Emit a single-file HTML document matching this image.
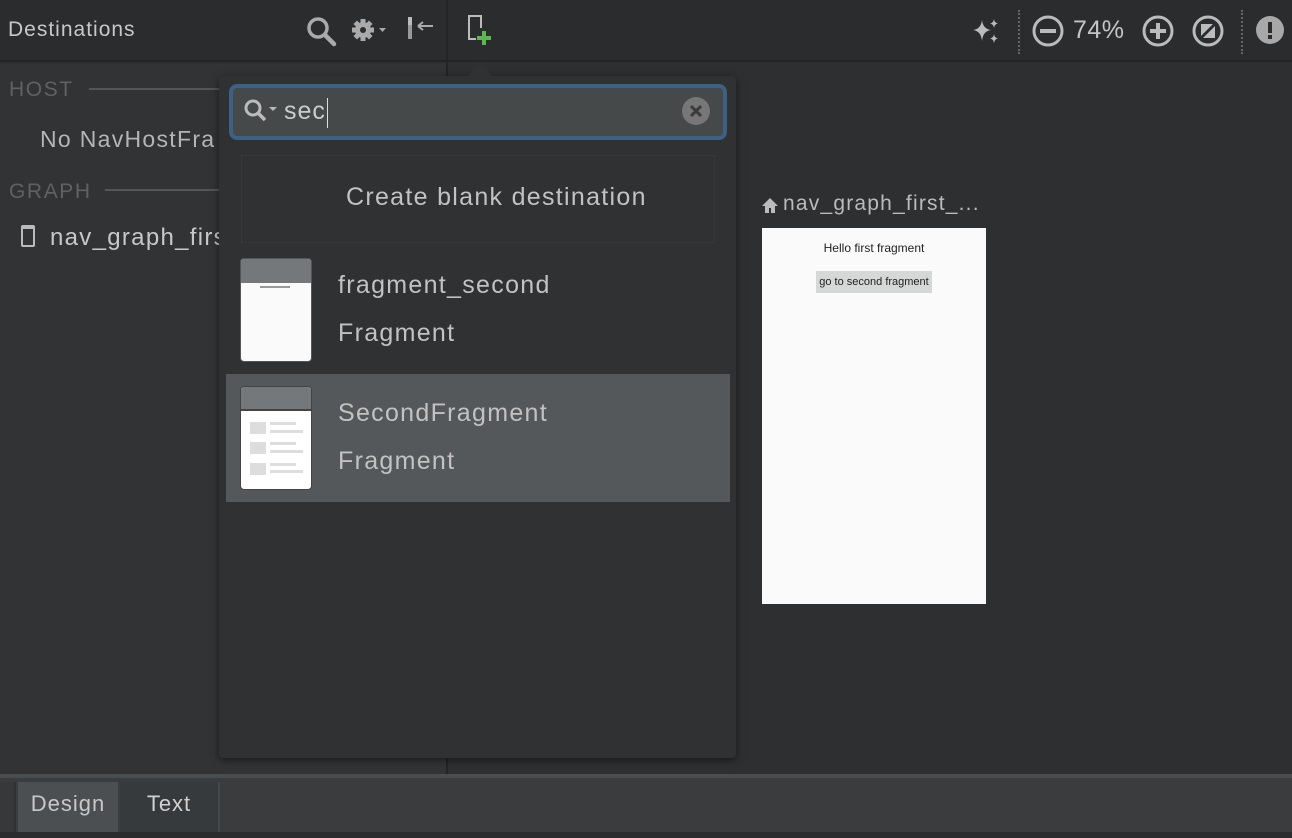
<!DOCTYPE html>
<html><head><style>
*{margin:0;padding:0;box-sizing:border-box}
body{width:1292px;height:838px;background:#2d2f31;font-family:"Liberation Sans",sans-serif;position:relative;overflow:hidden;color:#bbb}
.a{position:absolute;white-space:nowrap}
.t{letter-spacing:1.3px}
</style></head><body>
<!-- top bar -->
<div class="a" style="left:0;top:0;width:1292px;height:62px;background:#2b2c2e;border-bottom:2px solid #232425"></div>
<div class="a" style="left:446px;top:0;width:2px;height:775px;background:#232425"></div>
<div class="a" style="left:0;top:64px;width:446px;height:710px;background:#313335"></div>
<div class="a" style="left:8px;top:18px;font-size:21px;color:#c8c8c8;letter-spacing:1px">Destinations</div>
<svg class="a" style="left:304px;top:14px" width="34" height="34" viewBox="0 0 34 34"><circle cx="14" cy="14" r="9" fill="none" stroke="#aaa" stroke-width="3.5"/><path d="M21 21l9 9" stroke="#aaa" stroke-width="4.5" stroke-linecap="round"/></svg>
<svg class="a" style="left:350px;top:17px" width="42" height="28" viewBox="0 0 42 28"><g fill="#aaa" transform="translate(13 13)"><rect x="-2.5" y="-11" width="5" height="22"/><rect x="-2.5" y="-11" width="5" height="22" transform="rotate(45)"/><rect x="-2.5" y="-11" width="5" height="22" transform="rotate(90)"/><rect x="-2.5" y="-11" width="5" height="22" transform="rotate(135)"/><circle r="8"/><circle r="3" fill="#2b2c2e"/></g><path d="M29 11h7l-3.5 4z" fill="#aaa"/></svg>
<svg class="a" style="left:405px;top:15px" width="30" height="30" viewBox="0 0 30 30"><rect x="3" y="10" width="4" height="14" fill="#999"/><rect x="3" y="2" width="4" height="8" fill="#bbb"/><path d="M13 11h15M13 11l5-4M13 11l5 4" stroke="#aaa" stroke-width="2" fill="none"/></svg>
<svg class="a" style="left:465px;top:14px" width="32" height="34" viewBox="0 0 32 34"><path d="M11 25H4V2h12v12" fill="none" stroke="#bbb" stroke-width="2"/><path d="M19 17v14M12 24h14" stroke="#5fb552" stroke-width="4"/></svg>
<!-- right toolbar -->
<svg class="a" style="left:970px;top:17px" width="32" height="30" viewBox="0 0 32 30"><path d="M12 3 Q13 12 21 13 Q13 14 12 24 Q11 14 3 13 Q11 12 12 3Z" fill="#bbb"/><path d="M24 2 Q24.5 6 28 6.5 Q24.5 7 24 11 Q23.5 7 20 6.5 Q23.5 6 24 2Z" fill="#bbb"/><path d="M24 17 Q24.5 21 28 21.5 Q24.5 22 24 26 Q23.5 22 20 21.5 Q23.5 21 24 17Z" fill="#bbb"/></svg>
<div class="a" style="left:1018px;top:10px;height:44px;border-left:2px dotted #666"></div>
<div class="a" style="left:1241px;top:10px;height:44px;border-left:2px dotted #666"></div>
<svg class="a" style="left:1031px;top:14px" width="34" height="34"><circle cx="17" cy="17" r="14" fill="none" stroke="#bbb" stroke-width="3"/><rect x="9" y="15" width="16" height="4" fill="#bbb"/></svg>
<div class="a" style="left:1073px;top:16px;font-size:25px;color:#c5c5c5;letter-spacing:0.5px">74%</div>
<svg class="a" style="left:1141px;top:14px" width="34" height="34"><circle cx="17" cy="17" r="14" fill="none" stroke="#bbb" stroke-width="3"/><rect x="9" y="15" width="16" height="4" fill="#bbb"/><rect x="15" y="9" width="4" height="16" fill="#bbb"/></svg>
<svg class="a" style="left:1191px;top:14px" width="34" height="34"><circle cx="17" cy="17" r="14" fill="none" stroke="#bbb" stroke-width="3"/><path d="M10 10h12l-12 12z" fill="#bbb"/><path d="M24 12v12H12z" fill="#bbb"/><path d="M10 24L24 10" stroke="#2b2c2e" stroke-width="2"/></svg>
<svg class="a" style="left:1255px;top:16px" width="30" height="30"><circle cx="15" cy="14" r="14" fill="#a8a8a8"/><rect x="13" y="6" width="4" height="11" fill="#2b2c2e"/><rect x="13" y="19" width="4" height="4" fill="#2b2c2e"/></svg>
<!-- left panel -->
<div class="a" style="left:9px;top:78px;font-size:21px;color:#5f6163;letter-spacing:1.6px">HOST</div>
<div class="a" style="left:89px;top:88px;width:140px;height:2px;background:#555"></div>
<div class="a t" style="left:40px;top:126px;font-size:23px;color:#b5b5b5">No NavHostFra</div>
<div class="a" style="left:9px;top:180px;font-size:21px;color:#5f6163;letter-spacing:1.6px">GRAPH</div>
<div class="a" style="left:105px;top:189px;width:120px;height:2px;background:#555"></div>
<div class="a" style="left:21px;top:225px;width:14px;height:22px;border:2px solid #bbb;border-top-width:4px;border-radius:2px"></div>
<div class="a t" style="left:50px;top:224px;font-size:24px;color:#c8c8c8">nav_graph_firs</div>
<!-- canvas preview -->
<svg class="a" style="left:760px;top:196px" width="20" height="20"><path d="M2 10L10 2l8 8h-3v7h-4v-5H9v5H5v-7z" fill="#bbb"/></svg>
<div class="a" style="left:783px;top:192px;font-size:21px;color:#bbb;letter-spacing:1.2px">nav_graph_first_...</div>
<div class="a" style="left:762px;top:228px;width:224px;height:376px;background:#fafafa"></div>
<div class="a" style="left:762px;top:241px;width:224px;text-align:center;font-size:12px;color:#222">Hello first fragment</div>
<div class="a" style="left:816px;top:271px;width:116px;height:22px;background:#d6d7d7;font-size:11px;color:#222;text-align:center;line-height:22px">go to second fragment</div>
<!-- popup -->
<div class="a" style="left:219px;top:76px;width:517px;height:682px;background:#2f3133;border-radius:4px;box-shadow:0 2px 8px rgba(0,0,0,.5)"></div>
<div class="a" style="left:468px;top:62px;width:0;height:0;border-left:12px solid transparent;border-right:12px solid transparent;border-bottom:14px solid #2f3133"></div>
<div class="a" style="left:229px;top:84px;width:498px;height:56px;background:#45494a;border:4px solid #3d6185;border-radius:8px"></div>
<svg class="a" style="left:243px;top:98px" width="40" height="28"><circle cx="10" cy="10" r="7" fill="none" stroke="#bbb" stroke-width="3"/><path d="M15 15l7 7" stroke="#bbb" stroke-width="3.5"/><path d="M26 9h8l-4 4z" fill="#bbb"/></svg>
<div class="a" style="left:284px;top:97px;font-size:25px;color:#ccc;letter-spacing:1px">sec</div>
<div class="a" style="left:327px;top:98px;width:1px;height:30px;background:#ddd"></div>
<svg class="a" style="left:682px;top:97px" width="28" height="28"><circle cx="14" cy="14" r="14" fill="#777"/><path d="M9 9l10 10M19 9L9 19" stroke="#3a3a3a" stroke-width="3"/></svg>
<div class="a" style="left:241px;top:155px;width:474px;height:88px;border:1px dotted #3b3d3f"></div>
<div class="a t" style="left:346px;top:183px;font-size:25px;color:#c2c2c2">Create blank destination</div>
<!-- item 1 -->
<div class="a" style="left:240px;top:258px;width:72px;height:104px;background:#fafafa;border-radius:4px;overflow:hidden;border:1px solid #555"><div style="height:24px;background:#75787b"></div></div>
<div class="a" style="left:260px;top:286px;width:30px;height:2px;background:#999"></div>
<div class="a t" style="left:338px;top:271px;font-size:25px;color:#c2c2c2">fragment_second</div>
<div class="a t" style="left:338px;top:319px;font-size:25px;color:#c2c2c2">Fragment</div>
<!-- item 2 selected -->
<div class="a" style="left:226px;top:374px;width:504px;height:128px;background:#54585b"></div>
<div class="a" style="left:240px;top:386px;width:72px;height:104px;background:#fff;border-radius:4px;overflow:hidden;border:1px solid #444"><div style="height:24px;background:#75787b;border-bottom:2px solid #444"></div></div>
<div class="a" style="left:250px;top:422px;width:16px;height:12px;background:#ddd"></div><div class="a" style="left:270px;top:422px;width:26px;height:3px;background:#ddd"></div><div class="a" style="left:270px;top:430px;width:33px;height:3px;background:#ddd"></div>
<div class="a" style="left:250px;top:442px;width:16px;height:12px;background:#ddd"></div><div class="a" style="left:270px;top:442px;width:26px;height:3px;background:#ddd"></div><div class="a" style="left:270px;top:450px;width:33px;height:3px;background:#ddd"></div>
<div class="a" style="left:250px;top:463px;width:16px;height:12px;background:#ddd"></div><div class="a" style="left:270px;top:463px;width:26px;height:3px;background:#ddd"></div><div class="a" style="left:270px;top:470px;width:33px;height:3px;background:#ddd"></div>
<div class="a t" style="left:338px;top:399px;font-size:25px;color:#c2c2c2">SecondFragment</div>
<div class="a t" style="left:338px;top:447px;font-size:25px;color:#c2c2c2">Fragment</div>
<!-- bottom tabs -->
<div class="a" style="left:0;top:774px;width:1292px;height:4px;background:#4a4d50"></div>
<div class="a" style="left:0;top:778px;width:1292px;height:60px;background:#3a3c3e"></div>
<div class="a" style="left:0;top:832px;width:1292px;height:6px;background:#2b2c2e"></div>
<div class="a" style="left:0;top:782px;width:16px;height:50px;background:#36383a;border-right:2px solid #2f3133"></div>
<div class="a" style="left:18px;top:782px;width:100px;height:50px;background:#4b4f52;font-size:22px;color:#c8c8c8;text-align:center;line-height:44px;letter-spacing:1px">Design</div>
<div class="a" style="left:120px;top:782px;width:100px;height:50px;background:#373a3c;border-right:2px solid #45484a;font-size:22px;color:#d0d0d0;text-align:center;line-height:44px;letter-spacing:1px">Text</div>
</body></html>
